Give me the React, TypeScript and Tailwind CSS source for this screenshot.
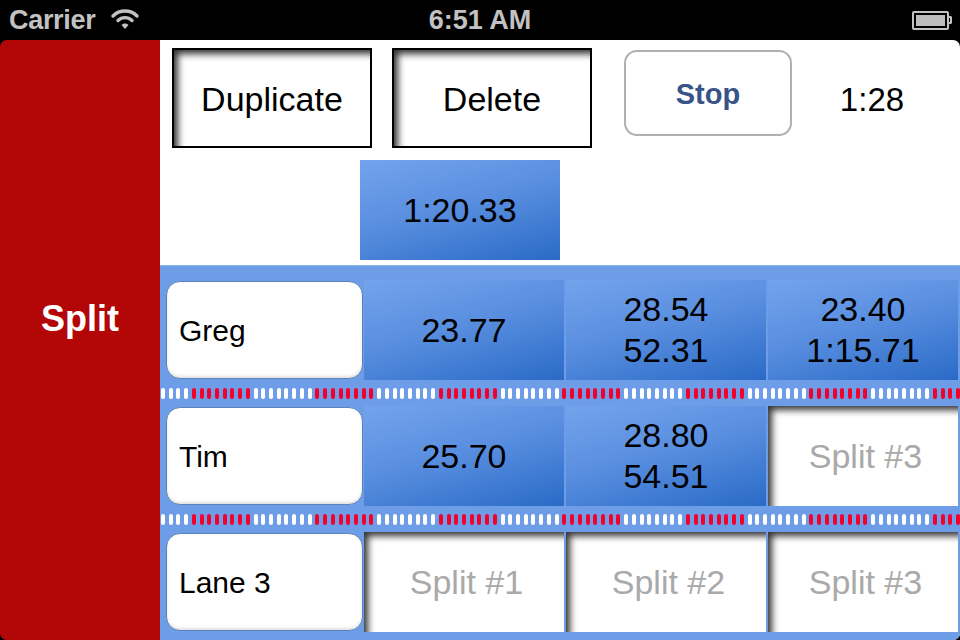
import React from 'react';

// Swim meet split timer screen

interface Lane {
    name: string;
    cells: (string[] | null)[];
}

const lanes: Lane[] = [
    { name: 'Greg', cells: [['23.77'], ['28.54', '52.31'], ['23.40', '1:15.71']] },
    { name: 'Tim', cells: [['25.70'], ['28.80', '54.51'], null] },
    { name: 'Lane 3', cells: [null, null, null] },
];

const cellWidths = ['w-[200px]', 'w-[200px]', 'w-[190px]'];

const PILL_COUNT = 104;

function StatusBar() {
    return (
        <div className="h-[40px] flex items-center relative text-[#c2c2c2] font-bold text-[27px] shrink-0">
            <span className="pl-[9px] tracking-[-0.3px]">Carrier</span>
            <svg width="30" height="22" viewBox="0 0 30 22" className="ml-[15px] mt-[-2px]">
                <path d="M3 8 A17 17 0 0 1 27 8" stroke="#c2c2c2" strokeWidth="3.4" fill="none" strokeLinecap="round" />
                <path d="M8 12.5 A10 10 0 0 1 22 12.5" stroke="#c2c2c2" strokeWidth="3.4" fill="none" strokeLinecap="round" />
                <path d="M11.5 17 L15 21 L18.5 17 A5 5 0 0 0 11.5 17 Z" fill="#c2c2c2" />
            </svg>
            <span className="absolute left-0 right-0 text-center pointer-events-none">6:51 AM</span>
            <div className="ml-auto mr-[8px] flex items-center">
                <div className="w-[37px] h-[19px] border-2 border-[#c2c2c2] rounded-[2px] p-[2px]">
                    <div className="w-full h-full bg-[#bdbdbd]" />
                </div>
                <div className="w-[3px] h-[8px] border-2 border-l-0 border-[#c2c2c2] rounded-r-[2px]" />
            </div>
        </div>
    );
}

function LaneRope() {
    return (
        <div className="h-[26px] flex items-center gap-[3.73px] pl-[1px] overflow-hidden">
            {Array.from({ length: PILL_COUNT }).map((_, i) => (
                <div
                    key={i}
                    className={`w-[4px] h-[11px] rounded-full shrink-0 ${
                        Math.floor((i + 4) / 8) % 2 === 1 ? 'bg-[#f4002c]' : 'bg-white'
                    }`}
                />
            ))}
        </div>
    );
}

function LaneRow({ lane }: { lane: Lane }) {
    return (
        <div className="h-[100px] flex">
            <div className="ml-[6px] my-[1px] w-[197px] bg-white rounded-[14px] border border-[#5b82bd] shadow-[inset_0_-2px_3px_rgba(0,0,0,0.12)] flex items-center pl-[12px] text-[30px] text-black">
                {lane.name}
            </div>
            <div className="ml-[1px] flex gap-[2px]">
                {lane.cells.map((c, i) =>
                    c ? (
                        <div
                            key={i}
                            className={`${cellWidths[i]} h-full bg-[linear-gradient(165deg,#73a3ec_0%,#5a8fe0_45%,#2a6bc7_100%)] flex flex-col items-center justify-center text-[34px] leading-[41px] text-black`}
                        >
                            {c.map((v) => (
                                <span key={v}>{v}</span>
                            ))}
                        </div>
                    ) : (
                        <div
                            key={i}
                            className={`${cellWidths[i]} h-full bg-white shadow-[inset_7px_7px_7px_-3px_rgba(0,0,0,0.8)] flex items-center justify-center pl-[5px] text-[34px] text-[#a9a9a9]`}
                        >
                            Split #{i + 1}
                        </div>
                    )
                )}
            </div>
        </div>
    );
}

export default function App() {
    return (
        <div className="w-[960px] h-[640px] bg-black flex flex-col overflow-hidden font-['Liberation_Sans',Arial,sans-serif]">
            <StatusBar />
            <div className="flex flex-1 rounded-[7px] overflow-hidden">
                {/* Left tab */}
                <div className="w-[160px] bg-[#b30606] flex justify-center pt-[259px]">
                    <span className="text-white font-bold text-[36px] leading-[40px] h-fit">Split</span>
                </div>

                <div className="flex-1 flex flex-col bg-white">
                    {/* Controls */}
                    <div className="h-[225px] flex flex-col">
                        <div className="flex pt-[8px] pl-[12px] items-start">
                            <button className="w-[200px] h-[100px] border-2 border-black bg-white shadow-[inset_7px_7px_7px_-3px_rgba(0,0,0,0.8)] pt-[3px] text-[34px] text-black">
                                Duplicate
                            </button>
                            <button className="ml-[20px] w-[200px] h-[100px] border-2 border-black bg-white shadow-[inset_7px_7px_7px_-3px_rgba(0,0,0,0.8)] pt-[3px] text-[34px] text-black">
                                Delete
                            </button>
                            <button className="ml-[32px] mt-[2px] w-[168px] h-[86px] rounded-[13px] border-2 border-[#b0b0b0] bg-white text-[29px] font-bold text-[#385387] pt-[4px]">
                                Stop
                            </button>
                            <div className="flex-1 h-[100px] flex items-center justify-center text-[33px] text-black pr-[8px] pt-[4px]">
                                1:28
                            </div>
                        </div>
                        <div className="ml-[200px] mt-[12px] w-[200px] h-[100px] bg-[linear-gradient(165deg,#73a3ec_0%,#5a8fe0_45%,#2a6bc7_100%)] flex items-center justify-center text-[34px] text-black">
                            1:20.33
                        </div>
                    </div>

                    {/* Lanes */}
                    <div className="flex-1 bg-[#6c9de6] border-t border-[#8db5ee] pt-[14px]">
                        {lanes.map((lane, i) => (
                            <React.Fragment key={lane.name}>
                                {i > 0 && <LaneRope />}
                                <LaneRow lane={lane} />
                            </React.Fragment>
                        ))}
                    </div>
                </div>
            </div>
        </div>
    );
}
